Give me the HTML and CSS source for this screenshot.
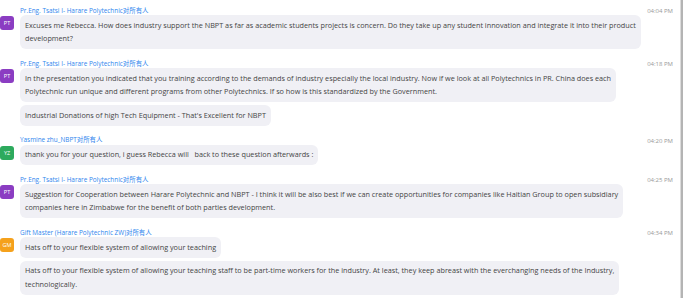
FILE: index.html
```html
<!DOCTYPE html>
<html lang="en">
  <head>
    <meta charset="utf-8" />
    <meta name="viewport" content="width=device-width, initial-scale=1.0" />
    <title>Chat</title>
    <link rel="stylesheet" href="styles.css">
  </head>
  <body>
    <main class="chat">
      <section class="group">
        <header class="meta"><span class="sender">Pr.Eng. Tsatsi I- Harare Polytechnic对所有人</span><time>04:04 PM</time></header>
        <span class="avatar purple">PT</span>
        <p class="bubble">Excuses me Rebecca. How does industry support the NBPT as far as academic students projects is concern. Do they take up any student innovation and integrate it into their product<br>development?</p>
      </section>

      <section class="group">
        <header class="meta"><span class="sender">Pr.Eng. Tsatsi I- Harare Polytechnic对所有人</span><time>04:18 PM</time></header>
        <span class="avatar purple">PT</span>
        <p class="bubble">In the presentation you indicated that you training according to the demands of industry especially the local industry. Now if we look at all Polytechnics in PR. China does each<br>Polytechnic run unique and different programs from other Polytechnics. If so how is this standardized by the Government.</p>
        <p class="bubble">Industrial Donations of high Tech Equipment - That's Excellent for NBPT</p>
      </section>

      <section class="group">
        <header class="meta"><span class="sender">Yasmine zhu_NBPT对所有人</span><time>04:20 PM</time></header>
        <span class="avatar green">YZ</span>
        <p class="bubble">thank you for your question, i guess Rebecca will&nbsp;&nbsp; back to these question afterwards :</p>
      </section>

      <section class="group">
        <header class="meta"><span class="sender">Pr.Eng. Tsatsi I- Harare Polytechnic对所有人</span><time>04:25 PM</time></header>
        <span class="avatar purple">PT</span>
        <p class="bubble">Suggestion for Cooperation between Harare Polytechnic and NBPT - I think it will be also best if we can create opportunities for companies like Haitian Group to open subsidiary<br>companies here in Zimbabwe for the benefit of both parties development.</p>
      </section>

      <section class="group">
        <header class="meta"><span class="sender">Gift Master (Harare Polytechnic ZW)对所有人</span><time>04:34 PM</time></header>
        <span class="avatar orange">GM</span>
        <p class="bubble">Hats off to your flexible system of allowing your teaching</p>
        <p class="bubble">Hats off to your flexible system of allowing your teaching staff to be part-time workers for the industry. At least, they keep abreast with the everchanging needs of the Industry,<br>technologically.</p>
      </section>
    </main>
    <div class="scrollbar"></div>
  </body>
</html>
```

FILE: styles.css
```css
html,
body {
  height: 100%;
  margin: 0;
}
body {
  display: flex;
  overflow: hidden;
  background: #fff;
  font-family: "Open Sans", "Noto Sans CJK SC", sans-serif;
  color: #444;
}
.chat {
  flex: 1 1;
  padding: 5px 7px 0 0;
  display: flex;
  flex-direction: column;
  gap: 9px;
}
.group {
  display: grid;
  grid-template-columns: 20px 1fr;
  row-gap: 3px;
  align-items: start;
}
.meta {
  grid-column: 2;
  display: flex;
  justify-content: space-between;
  align-items: center;
  height: 10px;
  margin-bottom: -3px; /* bubble sits right under the sender line */
}
.sender {
  font-size: 6.4px;
  color: #2f86ee;
}
time {
  font-size: 6px;
  color: #999;
  padding-top: 2px;
}
.avatar {
  grid-column: 1;
  grid-row: 2;
  width: 14px;
  height: 14px;
  margin-top: 1px;
  border-radius: 3px;
  display: grid;
  place-items: center;
  font-size: 5.5px;
  color: #fff;
}
.purple {
  background: #8b3dc2;
}
.green {
  background: #2daa5d;
}
.orange {
  background: #f5a11c;
}
.bubble {
  grid-column: 2;
  justify-self: start;
  margin: 0;
  padding: 3.5px 5px;
  font-size: 7.25px;
  line-height: 13.5px;
  background: #f0f0f5;
  border-radius: 6px;
}
.scrollbar {
  flex: 0 0 2px;
  border-left: 1px solid #dcdcdc;
  background: #b4b4b4;
}
```
